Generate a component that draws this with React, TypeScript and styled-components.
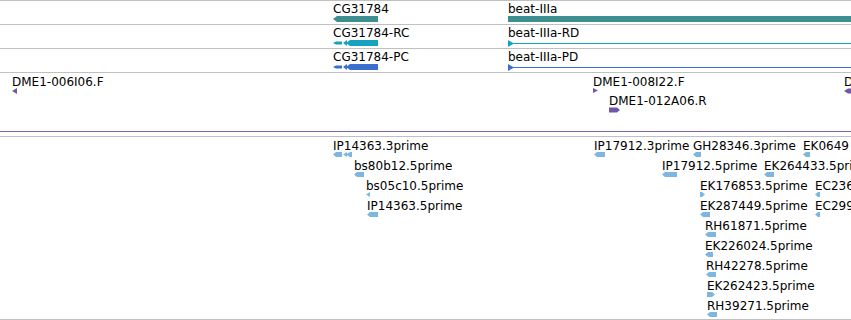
import React from 'react';
import styled, { createGlobalStyle } from 'styled-components';

const Global = createGlobalStyle`
  html, body { margin: 0; padding: 0; background: #fff; }
  body { font-family: "DejaVu Sans", "Liberation Sans", sans-serif; }
`;

const TEAL = '#3e9090';
const CYAN = '#17a2c0';
const BLUE = '#3b6ecf';
const PURPLE = '#7058a8';
const EST = '#7db6de';

const Browser = styled.div`
  width: 851px;
  height: 320px;
  overflow: hidden;
  display: flex;
  flex-direction: column;
  background: #fff;
`;

const Track = styled.div<{ $h: number; $bottom?: string }>`
  position: relative;
  flex: none;
  height: ${(p) => p.$h}px;
  border-top: 1px solid #c0c0c0;
  border-bottom: ${(p) => (p.$bottom ? `1px solid ${p.$bottom}` : 'none')};
  overflow: hidden;
`;

const Spacer = styled.div`
  flex: none;
  height: 4px;
`;

const Feature = styled.div<{ $x: number; $top: number }>`
  position: absolute;
  left: ${(p) => p.$x}px;
  top: ${(p) => p.$top}px;
  display: flex;
  flex-direction: column;
  align-items: flex-start;
`;

const Label = styled.span<{ $lh: number }>`
  display: block;
  height: ${(p) => p.$lh}px;
  font-family: "DejaVu Sans", "Liberation Sans", sans-serif;
  font-size: 12px;
  line-height: ${(p) => p.$lh}px;
  color: #000;
  white-space: nowrap;
`;

const GlyphSvg = styled.svg`
  display: block;
  flex: none;
`;

type Glyph = {
  w: number;
  h: number;
  color: string;
  polys: string[];
  line?: { y: number; x1: number; x2: number };
};

const leftPts = (w: number, h = 5, tip = 3) =>
  w <= tip + 1
    ? `0,${h / 2} ${w},0 ${w},${h}`
    : `0,${h / 2} ${tip},0 ${w},0 ${w},${h} ${tip},${h}`;

const rightPts = (w: number, h = 5, tip = 3) =>
  w <= tip + 1
    ? `0,0 ${w},${h / 2} 0,${h}`
    : `0,0 ${w - tip},0 ${w},${h / 2} ${w - tip},${h} 0,${h}`;

const est = (w: number, dir: 'l' | 'r' = 'l'): Glyph => ({
  w,
  h: 5,
  color: EST,
  polys: [dir === 'l' ? leftPts(w) : rightPts(w)],
});

const transcript = (color: string): Glyph => ({
  w: 46,
  h: 6,
  color,
  polys: [
    '0,3 3,1.5 9,1.5 9,4.5 3,4.5',
    '10,3 14,0 14,6',
    '13,3 17,0 45,0 45,6 17,6',
  ],
});

const mrnaLine = (color: string): Glyph => ({
  w: 343,
  h: 6,
  color,
  polys: ['0,0 6,3.5 0,7'],
  line: { y: 3.5, x1: 0, x2: 343 },
});

type Feat = { x: number; row: number; label: string; glyph: Glyph };

type TrackDef = {
  h: number;
  bottom?: string;
  lh: number;
  top0: number;
  pitch: number;
  features: Feat[];
};

const tracks: TrackDef[] = [
  {
    h: 23,
    lh: 13,
    top0: 2,
    pitch: 20,
    features: [
      {
        x: 333,
        row: 0,
        label: 'CG31784',
        glyph: { w: 45, h: 6, color: TEAL, polys: ['0,3 4,0 45,0 45,6 4,6'] },
      },
      {
        x: 508,
        row: 0,
        label: 'beat-IIIa',
        glyph: { w: 343, h: 6, color: TEAL, polys: ['0,0 343,0 343,6 0,6'] },
      },
    ],
  },
  {
    h: 23,
    lh: 13,
    top0: 2,
    pitch: 20,
    features: [
      { x: 333, row: 0, label: 'CG31784-RC', glyph: transcript(CYAN) },
      { x: 508, row: 0, label: 'beat-IIIa-RD', glyph: mrnaLine(CYAN) },
    ],
  },
  {
    h: 23,
    lh: 13,
    top0: 2,
    pitch: 20,
    features: [
      { x: 333, row: 0, label: 'CG31784-PC', glyph: transcript(BLUE) },
      { x: 508, row: 0, label: 'beat-IIIa-PD', glyph: mrnaLine(BLUE) },
    ],
  },
  {
    h: 58,
    bottom: '#7966aa',
    lh: 12,
    top0: 3,
    pitch: 19,
    features: [
      {
        x: 12,
        row: 0,
        label: 'DME1-006I06.F',
        glyph: { w: 5, h: 6, color: PURPLE, polys: ['0,3 5,0 5,6'] },
      },
      {
        x: 593,
        row: 0,
        label: 'DME1-008I22.F',
        glyph: { w: 5, h: 5, color: PURPLE, polys: ['0,0 5,2.5 0,5'] },
      },
      {
        x: 609,
        row: 1,
        label: 'DME1-012A06.R',
        glyph: { w: 11, h: 6, color: PURPLE, polys: ['0,0.5 8,0.5 11,3 8,5.5 0,5.5'] },
      },
      {
        x: 844,
        row: 0,
        label: 'DME1-',
        glyph: { w: 8, h: 6, color: PURPLE, polys: ['0,3 4,0.5 8,0.5 8,5.5 4,5.5'] },
      },
    ],
  },
];

const estTrack: TrackDef = {
  h: 182,
  bottom: '#c0c0c0',
  lh: 12,
  top0: 3,
  pitch: 20,
  features: [
    {
      x: 333,
      row: 0,
      label: 'IP14363.3prime',
      glyph: {
        w: 19,
        h: 5,
        color: EST,
        polys: ['0,2.5 3,0 9,0 9,5 3,5', '10,2.5 14,0 14,5', '13,2.5 17,0 19,0 19,5 17,5'],
      },
    },
    { x: 594, row: 0, label: 'IP17912.3prime', glyph: est(11) },
    { x: 693, row: 0, label: 'GH28346.3prime', glyph: est(8) },
    { x: 803, row: 0, label: 'EK0649', glyph: est(7) },
    { x: 354, row: 1, label: 'bs80b12.5prime', glyph: est(10) },
    { x: 662, row: 1, label: 'IP17912.5prime', glyph: est(15) },
    { x: 764, row: 1, label: 'EK264433.5prime', glyph: est(10) },
    { x: 366, row: 2, label: 'bs05c10.5prime', glyph: est(4) },
    { x: 700, row: 2, label: 'EK176853.5prime', glyph: est(5, 'r') },
    { x: 815, row: 2, label: 'EC236', glyph: est(5) },
    { x: 367, row: 3, label: 'IP14363.5prime', glyph: est(11) },
    { x: 700, row: 3, label: 'EK287449.5prime', glyph: est(10) },
    { x: 815, row: 3, label: 'EC299', glyph: est(5) },
    { x: 705, row: 4, label: 'RH61871.5prime', glyph: est(11) },
    { x: 705, row: 5, label: 'EK226024.5prime', glyph: est(8) },
    { x: 706, row: 6, label: 'RH42278.5prime', glyph: est(10) },
    { x: 707, row: 7, label: 'EK262423.5prime', glyph: est(8, 'r') },
    { x: 707, row: 8, label: 'RH39271.5prime', glyph: est(10) },
  ],
};

const GlyphView: React.FC<{ g: Glyph }> = ({ g }) => (
  <GlyphSvg width={g.w} height={g.h} viewBox={`0 0 ${g.w} ${g.h}`} overflow="visible">
    {g.line && (
      <line x1={g.line.x1} x2={g.line.x2} y1={g.line.y} y2={g.line.y} stroke={g.color} strokeWidth={1} />
    )}
    {g.polys.map((p, i) => (
      <polygon key={i} points={p} fill={g.color} />
    ))}
  </GlyphSvg>
);

const TrackView: React.FC<{ t: TrackDef }> = ({ t }) => (
  <Track $h={t.h} $bottom={t.bottom}>
    {t.features.map((f, i) => (
      <Feature key={i} $x={f.x} $top={t.top0 + f.row * t.pitch}>
        <Label $lh={t.lh}>{f.label}</Label>
        <GlyphView g={f.glyph} />
      </Feature>
    ))}
  </Track>
);

export default function App() {
  return (
    <>
      <Global />
      <Browser>
        {tracks.map((t, i) => (
          <TrackView key={i} t={t} />
        ))}
        <Spacer />
        <TrackView t={estTrack} />
      </Browser>
    </>
  );
}
